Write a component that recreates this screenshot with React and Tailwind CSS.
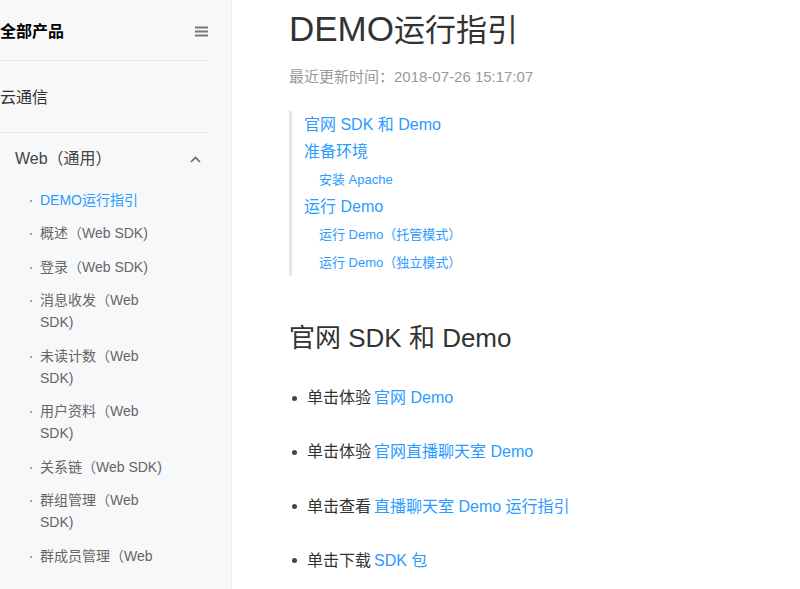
import React from "react";

const subItems = [
  { t: "DEMO运行指引", active: true },
  { t: "概述（Web SDK)" },
  { t: "登录（Web SDK)" },
  { t: "消息收发（Web SDK)" },
  { t: "未读计数（Web SDK)" },
  { t: "用户资料（Web SDK)" },
  { t: "关系链（Web SDK)" },
  { t: "群组管理（Web SDK)" },
  { t: "群成员管理（Web SDK)" },
];

const toc = [
  { t: "官网 SDK 和 Demo", lvl: 1 },
  { t: "准备环境", lvl: 1 },
  { t: "安装 Apache", lvl: 2 },
  { t: "运行 Demo", lvl: 1 },
  { t: "运行 Demo（托管模式）", lvl: 2 },
  { t: "运行 Demo（独立模式）", lvl: 2 },
];

const bullets = [
  { pre: "单击体验", link: "官网 Demo" },
  { pre: "单击体验", link: "官网直播聊天室 Demo" },
  { pre: "单击查看", link: "直播聊天室 Demo 运行指引" },
  { pre: "单击下载", link: "SDK 包" },
];

export default function App() {
  return (
    <div
      className="flex h-[589px] w-[800px] overflow-hidden bg-white text-[#333]"
      style={{ fontFamily: '"Liberation Sans", Arial, "Noto Sans CJK SC", sans-serif' }}
    >
      <aside className="h-full w-[232px] shrink-0 overflow-hidden border-r border-[#ececec] bg-[#f7f8fa]">
        <div className="mr-[22px] h-[566px] overflow-hidden">
          <div className="flex h-[61px] items-center justify-between border-b border-[#e5e5e5] pt-[3px]">
            <span className="text-[16px] font-bold text-[#000]">全部产品</span>
            <svg width="13" height="11" viewBox="0 0 13 11" className="mr-[1px]">
              <rect x="0" y="0.5" width="13" height="2" fill="#777" />
              <rect x="0" y="4.5" width="13" height="2" fill="#777" />
              <rect x="0" y="8.5" width="13" height="2" fill="#777" />
            </svg>
          </div>
          <div className="flex h-[72px] items-center border-b border-[#e5e5e5] pt-[2px] text-[16px] text-[#333]">
            云通信
          </div>
          <div className="flex h-[50px] items-center justify-between pl-[15px] pr-[8px] pt-[2px] text-[16px] text-[#444]">
            <span>Web（通用）</span>
            <svg width="11" height="7" viewBox="0 0 11 7">
              <path d="M1 6 L5.5 1.5 L10 6" fill="none" stroke="#666" strokeWidth="1.6" />
            </svg>
          </div>
          <ul>
            {subItems.map((s, i) => (
              <li key={i} className="flex py-[5.75px] pl-[30px] text-[14px] leading-[22px]">
                <span className="w-[10px] shrink-0 text-[#999]">
                  <span className="inline-block h-[2px] w-[2px] translate-y-[-3px] rounded-full bg-[#888]" />
                </span>
                <span className={"w-[125px] " + (s.active ? "text-[#2b9bff]" : "text-[#666]")}>{s.t}</span>
              </li>
            ))}
          </ul>
        </div>
      </aside>
      <main className="flex-1 pl-[57px] pt-[6px]">
        <h1 className="text-[35px] leading-[46px] text-[#333]">
          DEMO<span className="text-[31px]">运行指引</span>
        </h1>
        <p className="mt-[12px] text-[15px] leading-[22px] text-[#999]">最近更新时间：2018-07-26 15:17:07</p>
        <div className="mt-[23px] border-l-[3px] border-[#e5e5e5] pl-[12px]">
          {toc.map((t, i) =>
            t.lvl === 1 ? (
              <div key={i} className="text-[16px] leading-[27px] text-[#2b9bff]">{t.t}</div>
            ) : (
              <div key={i} className="pl-[15px] pt-[2px] text-[13px] leading-[26px] text-[#2b9bff]">{t.t}</div>
            )
          )}
        </div>
        <h2 className="mt-[44px] text-[26px] leading-[36px] text-[#333]">官网 SDK 和 Demo</h2>
        <ul className="mt-[31px]">
          {bullets.map((b, i) => (
            <li key={i} className="mb-[32.3px] flex items-center text-[16px] leading-[22px]">
              <span className="mr-[10px] ml-[3px] h-[5px] w-[5px] rounded-full bg-[#444]" />
              <span className="text-[#333]">{b.pre}</span>
              <span className="ml-[3px] text-[#2b9bff]">{b.link}</span>
            </li>
          ))}
        </ul>
      </main>
    </div>
  );
}
